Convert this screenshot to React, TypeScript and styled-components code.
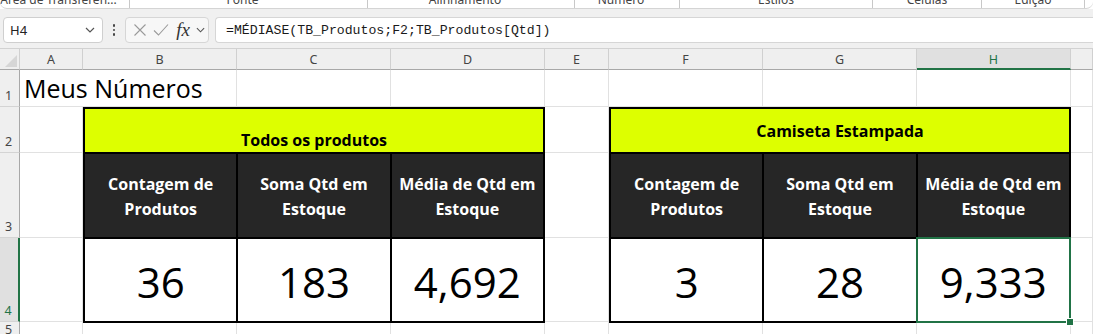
import React from 'react';
import styled, { createGlobalStyle } from 'styled-components';

const GREEN = '#217346';

const GlobalStyle = createGlobalStyle`
  html, body {
    margin: 0;
    padding: 0;
    background: #ffffff;
    overflow: hidden;
  }
  body {
    font-family: "Noto Sans", "Open Sans", sans-serif;
    color: #222;
  }
`;

const ribbonGroups = [
  { label: 'Área de Transferên...', width: 130, launcher: true },
  { label: 'Fonte', width: 238, launcher: true },
  { label: 'Alinhamento', width: 207, launcher: true },
  { label: 'Número', width: 105, launcher: true },
  { label: 'Estilos', width: 193, launcher: false },
  { label: 'Células', width: 109, launcher: false },
  { label: 'Edição', width: 103, launcher: false },
];

const columns = ['A', 'B', 'C', 'D', 'E', 'F', 'G', 'H'];

const tables = [
  {
    title: 'Todos os produtos',
    col: 3,
    titleAlign: 'flex-end',
    values: ['36', '183', '4,692'],
    selected: -1,
  },
  {
    title: 'Camiseta Estampada',
    col: 7,
    titleAlign: 'center',
    values: ['3', '28', '9,333'],
    selected: 2,
  },
];

const headers = [
  ['Contagem de', 'Produtos'],
  ['Soma Qtd em', 'Estoque'],
  ['Média de Qtd em', 'Estoque'],
];

const Chevron = () => (
  <svg width="10" height="6" viewBox="0 0 10 6">
    <path d="M1 1l4 4 4-4" stroke="#555" strokeWidth="1.2" fill="none" />
  </svg>
);

const Launcher = () => (
  <svg width="9" height="9" viewBox="0 0 9 9">
    <path d="M1 1v7h7" stroke="#666" strokeWidth="1" fill="none" />
    <path d="M3 3l4 4M7 4.5V7H4.5" stroke="#666" strokeWidth="1" fill="none" />
  </svg>
);

const App: React.FC = () => {
  return (
    <>
      <GlobalStyle />
      <Ribbon>
        {ribbonGroups.map((g) => (
          <RibbonGroup key={g.label} $w={g.width}>
            <GroupLabel>{g.label}</GroupLabel>
            {g.launcher && (
              <LauncherBox>
                <Launcher />
              </LauncherBox>
            )}
          </RibbonGroup>
        ))}
      </Ribbon>

      <FormulaArea>
        <NameBox>
          <span>H4</span>
          <Chevron />
        </NameBox>
        <Dots>
          <i />
          <i />
          <i />
        </Dots>
        <ButtonsBox>
          <IconSlot>
            <svg width="14" height="14" viewBox="0 0 14 14">
              <path d="M1.5 1.5l11 11M12.5 1.5l-11 11" stroke="#9a9a9a" strokeWidth="1.1" fill="none" />
            </svg>
          </IconSlot>
          <IconSlot>
            <svg width="16" height="14" viewBox="0 0 16 14">
              <path d="M1 7.5l4.5 4.5L15 1.5" stroke="#9a9a9a" strokeWidth="1.1" fill="none" />
            </svg>
          </IconSlot>
          <Fx>fx</Fx>
          <Chevron />
        </ButtonsBox>
        <FormulaBox>=MÉDIASE(TB_Produtos;F2;TB_Produtos[Qtd])</FormulaBox>
      </FormulaArea>

      <Sheet>
        <Corner>
          <svg width="12" height="12" viewBox="0 0 12 12">
            <path d="M12 0V12H0Z" fill="#d6d6d6" />
          </svg>
        </Corner>
        {columns.map((c, i) => (
          <ColHead key={c} $col={i + 2} $selected={c === 'H'}>
            {c}
          </ColHead>
        ))}
        <ColHead $col={10} $selected={false} />

        {[1, 2, 3, 4, 5].map((r) => (
          <RowHead key={r} $row={r + 1} $selected={r === 4}>
            {r}
          </RowHead>
        ))}

        {[1, 2, 3, 4, 5].map((r) =>
          [2, 3, 4, 5, 6, 7, 8, 9, 10].map((c) =>
            r === 1 && (c === 2 || c === 3) ? null : <GridCell key={`${r}-${c}`} $row={r + 1} $col={c} />
          )
        )}

        <TitleCell>Meus Números</TitleCell>

        {tables.map((t) => (
          <Table key={t.title} $col={t.col}>
            <TableTitle $align={t.titleAlign}>{t.title}</TableTitle>
            {headers.map((h) => (
              <HeadCell key={h[0]}>
                {h[0]}
                <br />
                {h[1]}
              </HeadCell>
            ))}
            {t.values.map((v, i) => (
              <ValueCell key={v} $selected={i === t.selected}>
                {v}
              </ValueCell>
            ))}
          </Table>
        ))}
      </Sheet>
    </>
  );
};

const Ribbon = styled.div`
  box-sizing: border-box;
  height: 9px;
  display: flex;
  overflow: hidden;
  background: #ffffff;
  border-bottom: 1px solid #d4d4d4;
  border-radius: 0 0 7px 7px;
`;

const RibbonGroup = styled.div<{ $w: number }>`
  box-sizing: border-box;
  flex: none;
  width: ${(p) => p.$w}px;
  display: flex;
  align-items: flex-end;
  border-right: 1px solid #c8c8c8;
`;

const GroupLabel = styled.div`
  flex: 1;
  text-align: center;
  font-size: 12px;
  line-height: 16px;
  color: #444;
  white-space: nowrap;
`;

const LauncherBox = styled.div`
  flex: none;
  width: 12px;
  height: 12px;
  margin-bottom: -4px;
`;

const FormulaArea = styled.div`
  box-sizing: border-box;
  height: 40px;
  display: flex;
  align-items: flex-start;
  padding: 8px 0 0 3px;
  background: #f0f0f0;
  border-bottom: 1px solid #d2d2d2;
`;

const NameBox = styled.div`
  box-sizing: border-box;
  width: 100px;
  height: 26px;
  display: flex;
  align-items: center;
  justify-content: space-between;
  padding: 0 7px 0 6px;
  background: #ffffff;
  border: 1px solid #cfcfcf;
  border-radius: 4px;
  font-size: 13px;
  color: #222;
`;

const Dots = styled.div`
  width: 22px;
  height: 26px;
  display: flex;
  flex-direction: column;
  align-items: center;
  justify-content: center;
  gap: 2px;

  i {
    width: 2.5px;
    height: 2.5px;
    border-radius: 50%;
    background: #444;
  }
`;

const ButtonsBox = styled.div`
  box-sizing: border-box;
  width: 84px;
  height: 26px;
  display: flex;
  align-items: center;
  padding: 0 3px 0 5px;
  gap: 3px;
  background: #f7f7f7;
  border: 1px solid #d6d6d6;
  border-radius: 4px;
`;

const IconSlot = styled.div`
  width: 20px;
  display: flex;
  justify-content: center;
`;

const Fx = styled.div`
  width: 22px;
  text-align: center;
  font-family: "Liberation Serif", serif;
  font-style: italic;
  font-size: 19px;
  line-height: 20px;
  color: #333;
`;

const FormulaBox = styled.div`
  box-sizing: border-box;
  flex: 1;
  height: 26px;
  margin-left: 6px;
  display: flex;
  align-items: center;
  padding-left: 10px;
  background: #ffffff;
  border: 1px solid #d6d6d6;
  border-right: none;
  border-radius: 4px 0 0 4px;
  font-family: "Liberation Mono", monospace;
  font-size: 13.2px;
  color: #1a1a1a;
  white-space: nowrap;
`;

const Sheet = styled.div`
  display: grid;
  grid-template-columns: 20px 63px 154px 154px 154px 64px 154px 154px 154px 1fr;
  grid-template-rows: 21px 37px 46px 85px 84px 1fr;
  height: 285px;
  font-family: "Open Sans", "Noto Sans", sans-serif;
`;

const Corner = styled.div`
  grid-column: 1;
  grid-row: 1;
  display: flex;
  align-items: flex-end;
  justify-content: flex-end;
  padding: 0 2px 2px 0;
  background: #efefef;
  border-bottom: 1px solid #a8a8a8;
  border-right: 1px solid #d0d0d0;
  box-sizing: border-box;
`;

const ColHead = styled.div<{ $col: number; $selected: boolean }>`
  grid-column: ${(p) => p.$col};
  grid-row: 1;
  box-sizing: border-box;
  display: flex;
  align-items: center;
  justify-content: center;
  background: ${(p) => (p.$selected ? '#e0e0e0' : '#efefef')};
  border-right: 1px solid #d0d0d0;
  border-bottom: ${(p) => (p.$selected ? `2px solid ${GREEN}` : '1px solid #a8a8a8')};
  font-family: "Noto Sans", sans-serif;
  font-size: 12.5px;
  color: ${(p) => (p.$selected ? GREEN : '#444')};
  padding-top: ${(p) => (p.$selected ? '1px' : '0')};
`;

const RowHead = styled.div<{ $row: number; $selected: boolean }>`
  grid-column: 1;
  grid-row: ${(p) => p.$row};
  box-sizing: border-box;
  display: flex;
  align-items: flex-end;
  justify-content: center;
  padding: 0 2px 2px 0;
  background: ${(p) => (p.$selected ? '#e0e0e0' : '#efefef')};
  border-right: ${(p) => (p.$selected ? `2px solid ${GREEN}` : '1px solid #a8a8a8')};
  border-bottom: 1px solid #d4d4d4;
  font-family: "Noto Sans", sans-serif;
  font-size: 12.5px;
  line-height: 16px;
  color: ${(p) => (p.$selected ? GREEN : '#444')};
`;

const GridCell = styled.div<{ $row: number; $col: number }>`
  grid-column: ${(p) => p.$col};
  grid-row: ${(p) => p.$row};
  border-right: 1px solid #e1e1e1;
  border-bottom: 1px solid #e1e1e1;
`;

const TitleCell = styled.div`
  grid-column: 2 / 4;
  grid-row: 2;
  display: flex;
  align-items: flex-end;
  padding: 0 0 3px 4px;
  border-right: 1px solid #e1e1e1;
  border-bottom: 1px solid #e1e1e1;
  font-size: 25px;
  line-height: 30px;
  color: #000;
  white-space: nowrap;
`;

const Table = styled.div<{ $col: number }>`
  grid-column: ${(p) => p.$col} / span 3;
  grid-row: 3 / 6;
  box-sizing: border-box;
  margin-bottom: -1px;
  display: grid;
  grid-template-columns: repeat(3, 1fr);
  grid-template-rows: 43px 83px 1fr;
  gap: 2px;
  background: #000000;
  border: 2px solid #000000;
  position: relative;
  z-index: 1;
`;

const TableTitle = styled.div<{ $align: string }>`
  grid-column: 1 / -1;
  display: flex;
  align-items: ${(p) => p.$align};
  justify-content: center;
  padding-bottom: ${(p) => (p.$align === 'flex-end' ? '2px' : '0')};
  background: #ddff00;
  font-size: 16px;
  font-weight: 700;
  line-height: 20px;
  color: #000;
`;

const HeadCell = styled.div`
  display: flex;
  align-items: center;
  justify-content: center;
  text-align: center;
  background: #262626;
  color: #ffffff;
  font-size: 16px;
  font-weight: 700;
  line-height: 25px;
  padding-top: 2px;
`;

const ValueCell = styled.div<{ $selected: boolean }>`
  position: relative;
  display: flex;
  align-items: center;
  justify-content: center;
  padding-top: 4px;
  background: #ffffff;
  font-size: 42px;
  line-height: 1;
  color: #000;

  &::after {
    content: '';
    display: ${(p) => (p.$selected ? 'block' : 'none')};
    position: absolute;
    inset: -2px;
    border: 2px solid ${GREEN};
  }

  &::before {
    content: '';
    display: ${(p) => (p.$selected ? 'block' : 'none')};
    position: absolute;
    right: -5px;
    bottom: -5px;
    width: 6px;
    height: 6px;
    background: ${GREEN};
    border: 1px solid #ffffff;
    z-index: 2;
  }
`;

export default App;
